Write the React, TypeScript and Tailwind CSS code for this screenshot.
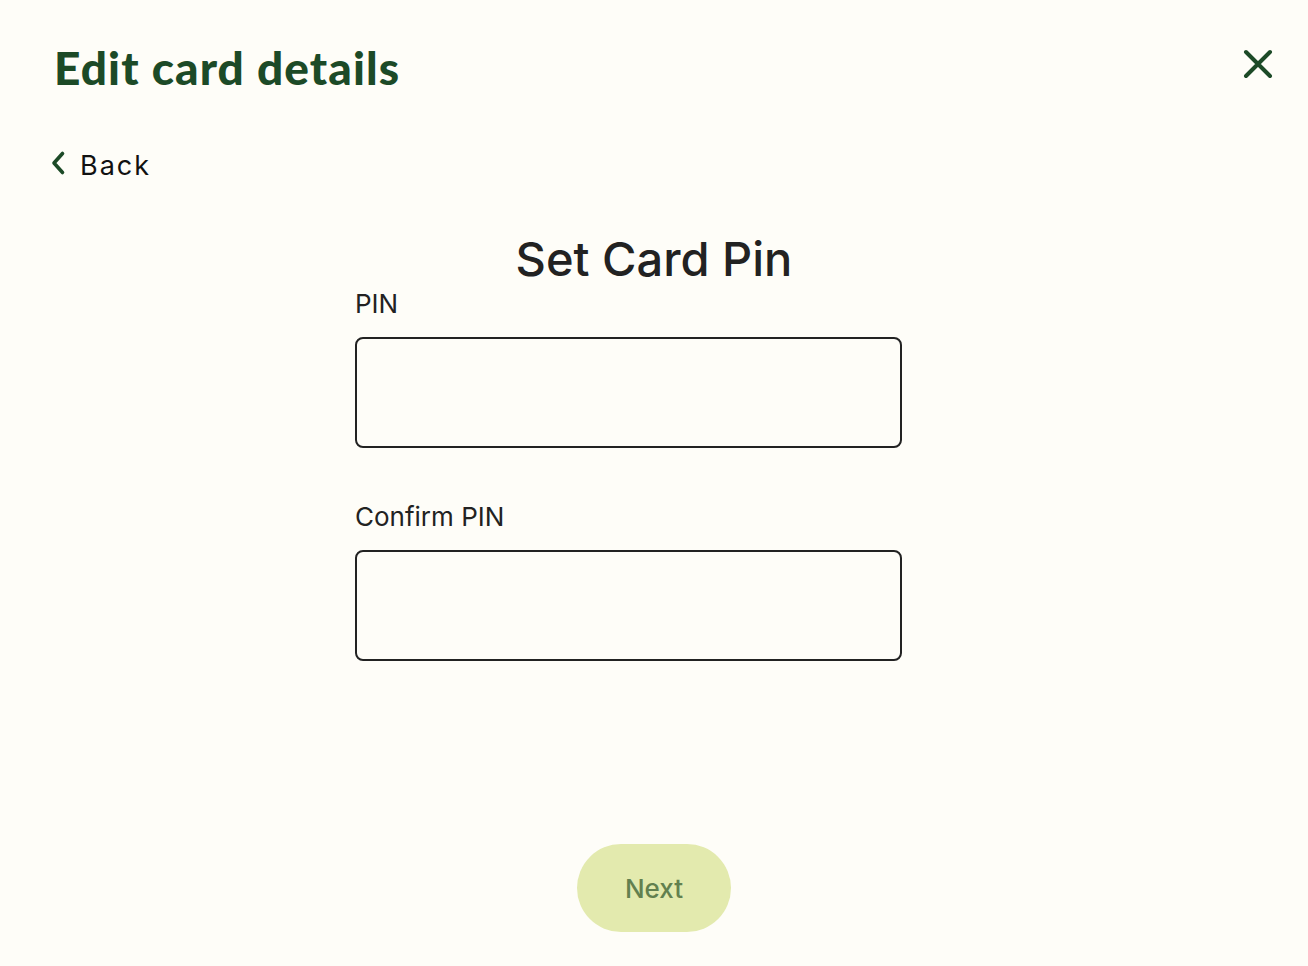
import { useState } from "react";

function CloseIcon() {
  return (
    <svg width="32" height="32" viewBox="0 0 32 32" fill="none">
      <path d="M4 4L28 28M28 4L4 28" stroke="#1c4a27" strokeWidth="4" strokeLinecap="round" />
    </svg>
  );
}

function ChevronLeft() {
  return (
    <svg width="16" height="26" viewBox="0 0 16 26" fill="none" className="-mt-[6px]">
      <path d="M12.5 3.5L4 13L12.5 22.5" stroke="#1c4a27" strokeWidth="3.6" strokeLinecap="round" strokeLinejoin="round" />
    </svg>
  );
}

function PinField({ label, value, onChange }: { label: string; value: string; onChange: (v: string) => void }) {
  return (
    <label className="block">
      <span className="block text-[26px] leading-[30px] text-[#222222]">{label}</span>
      <input
        type="password"
        inputMode="numeric"
        value={value}
        onChange={(e) => onChange(e.target.value)}
        className="mt-[18px] block h-[111px] w-[547px] rounded-[8px] border-2 border-[#222222] bg-transparent px-4 text-2xl outline-none"
      />
    </label>
  );
}

export default function App() {
  const [pin, setPin] = useState("");
  const [confirm, setConfirm] = useState("");

  return (
    <div className="min-h-[966px] w-full bg-[#fefdf8] font-['Inter','Liberation_Sans',sans-serif]">
      <header className="flex items-start justify-between pl-[54px] pr-[34px] pt-[38px]">
        <h1 className="font-['Lato',sans-serif] text-[46px] font-black leading-[60px] tracking-[1.1px] text-[#1c4a27]">
          Edit card details
        </h1>
        <button className="mt-[10px]">
          <CloseIcon />
        </button>
      </header>

      <button className="ml-[50px] mt-[51px] flex items-center gap-[14px]">
        <ChevronLeft />
        <span className="text-[27px] leading-[34px] tracking-[2px] text-[#111111]">Back</span>
      </button>

      <h2 className="mt-[48px] text-center text-[47px] font-medium leading-[56px] text-[#222222]">
        Set Card Pin
      </h2>

      <div className="ml-[355px] mt-[2px] flex flex-col gap-[54px]">
        <PinField label="PIN" value={pin} onChange={setPin} />
        <PinField label="Confirm PIN" value={confirm} onChange={setConfirm} />
      </div>

      <div className="mt-[183px] flex justify-center">
        <button className="h-[88px] w-[154px] rounded-full bg-[#e3eaae] text-[26px] font-medium text-[#62804f]">
          Next
        </button>
      </div>
    </div>
  );
}
